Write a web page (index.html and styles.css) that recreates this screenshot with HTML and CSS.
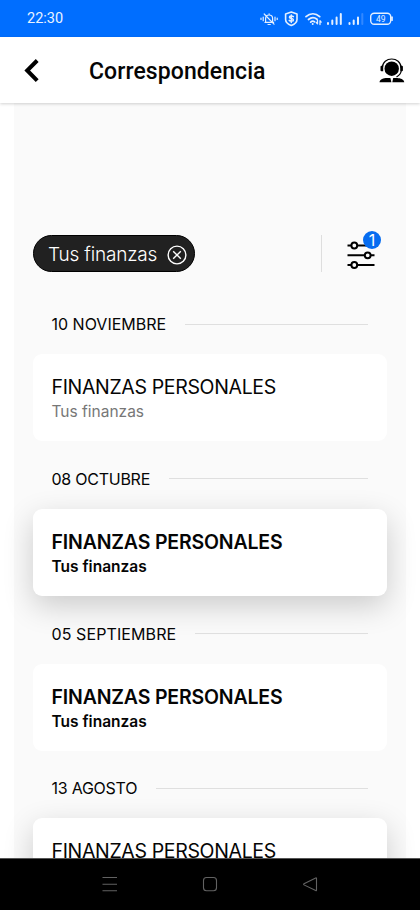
FILE: index.html
```html
<!DOCTYPE html>
<html lang="es">
<head>
<meta charset="utf-8">
<meta name="viewport" content="width=device-width, initial-scale=1">
<title>Correspondencia</title>
<link rel="stylesheet" href="styles.css">
</head>
<body>
<div class="phone">
  <div class="status">
    <span class="clock">22:30</span>
    <svg class="status-icons" width="136" height="20" viewBox="0 0 136 20" fill="none" stroke="#e3efff" stroke-width="1.2" stroke-linecap="round" stroke-linejoin="round">
      <path d="M6 13.400h8.600M6.600 13V9.500a3.500 3.500 0 0 1 7 0V13M9 15.500h2.300M10.100 4.800v1M5.200 5l9.800 10.200M4.200 8v3.700M2 9.200v1.300M16 8v3.700M18.200 9.200v1.300"/>
      <path stroke-width="1.6" d="M32.300 3.100l5.700 1.800v5.500c0 3-2.500 4.700-5.700 6-3.200-1.300-5.700-3-5.700-6V4.900z"/>
      <path stroke-width="1.5" d="M34.400 7.600c-1.100-1-4-.9-4 .6 0 1.700 4 .9 4 2.700 0 1.500-3 1.600-4.200.5M32.300 6v7.500"/>
      <path stroke-width="1.8" d="M47 7.600c4.200-3.700 9.600-3.700 13.700 0M49.500 10.500c2.700-2.300 6-2.300 8.500-.3M51.700 13.100c1.400-1.200 2.700-1.200 3.900-.2"/>
      <circle cx="53.700" cy="15" r="1" fill="#e3efff" stroke="none"/>
      <path stroke-width="1.3" d="M58.500 11v3.500M57.300 13.500l1.200 1.300M61 15.500V12M61 11.800l1.200 1.300"/>
      <g stroke-width="2" stroke-linecap="round"><path d="M69 15v-1M73.300 15v-3.500M77.600 15v-6.500M81.800 15v-10M90.500 15v-1M94.700 15v-3.500M99 15v-6.500"/><path stroke="#3288ff" d="M103.300 15v-10"/></g>
      <rect x="111.700" y="4.200" width="20" height="11" rx="3.500" stroke-width="1.400"/>
      <path stroke-width="1.700" d="M133 8.200v3"/>
      <text x="121.700" y="12.500" class="battery" text-anchor="middle">49</text>
    </svg>
  </div>
  <header class="header">
    <svg class="back" width="16" height="24" viewBox="0 0 16 24" fill="none" stroke="#000" stroke-width="4"><path d="M13.200 1.500L3.200 11.500l10 10.200"/></svg>
    <h1>Correspondencia</h1>
    <svg class="agent" width="26" height="26" viewBox="0 0 26 26">
      <circle cx="12.700" cy="10.700" r="7.200"/>
      <path d="M3.200 10C3.600-2 21.800-2 22.200 10" fill="none" stroke="#000" stroke-width="1.200"/>
      <path d="M1.500 8.800q0-1 1-1h1.700v5.500H2.500q-1 0-1-1zM21.200 7.800h1.700q1 0 1 1v3.500q0 1-1 1h-1.700z"/>
      <path d="M22.200 13q-.4 3.500-4.700 6" fill="none" stroke="#000" stroke-width="1.200"/>
      <path d="M.5 24.300c.5-3.200 4-4 7.400-4.200h3.500l1 4.200zM14.200 20.100h4c3.500.3 6.600 1.200 7.100 4.200h-12z"/>
    </svg>
  </header>
  <main class="panel">
    <div class="filters">
      <div class="chip"><span>Tus finanzas</span>
        <svg width="20" height="20" viewBox="0 0 20 20" fill="none" stroke="#fff" stroke-width="1.4"><circle cx="10" cy="10" r="8.900"/><path d="M6.200 6.200l7.600 7.600M13.800 6.200l-7.600 7.600"/></svg>
      </div>
      <div class="settings">
        <svg width="28" height="28" viewBox="0 0 28 28" fill="#fafafa" stroke="#000" stroke-width="2"><path d="M.5 4.500h27M.5 14.300h27M.5 24h27"/><circle cx="7.300" cy="4.500" r="2.900"/><circle cx="20.700" cy="14.300" r="2.900"/><circle cx="7.300" cy="24" r="2.900"/></svg>
        <span class="badge">1</span>
      </div>
    </div>
    <section class="group"><h2><span>10 NOVIEMBRE</span></h2><article class="card read"><h3>FINANZAS PERSONALES</h3><p>Tus finanzas</p></article></section>
    <section class="group"><h2><span class="tight">08 OCTUBRE</span></h2><article class="card unread raised"><h3>FINANZAS PERSONALES</h3><p>Tus finanzas</p></article></section>
    <section class="group"><h2><span class="loose">05 SEPTIEMBRE</span></h2><article class="card unread"><h3>FINANZAS PERSONALES</h3><p>Tus finanzas</p></article></section>
    <section class="group"><h2><span class="tight">13 AGOSTO</span></h2><article class="card read raised"><h3>FINANZAS PERSONALES</h3><p>Tus finanzas</p></article></section>
  </main>
  <nav class="nav">
    <svg width="16" height="16" viewBox="0 0 16 16"><path d="M.5 1.500h14.500M.5 8.200h14.500M.5 14.700h14.500"/></svg>
    <svg width="16" height="16" viewBox="0 0 16 16"><rect x="1.500" y="1.500" width="13" height="13.300" rx="3"/></svg>
    <svg width="16" height="16" viewBox="0 0 16 16"><path d="M14.500 2.400v11.800q0 .8-.8.400L2 8.900q-.8-.6 0-1.200L13.700 2q.8-.4.800.4z"/></svg>
  </nav>
</div>
</body>
</html>
```
FILE: styles.css
```css
* { box-sizing: border-box; }
body { margin: 0; background: #fff; color: #050505; font-family: Inter, "Liberation Sans", sans-serif; }
h1, h2, h3, p { margin: 0; }
svg { display: block; flex: none; }
.phone { display: flex; flex-direction: column; height: 910px; overflow: hidden; }
.status { flex: none; height: 37px; display: flex; align-items: center; justify-content: space-between; padding: 0 25px 0 27px; background: #006eff; color: #e9f3ff; }
.clock { padding-top: 1px; font: 14.5px/20px Roboto, sans-serif; }
.status-icons { margin-top: 1px; }
.battery { font: 8.5px Roboto, sans-serif; fill: #e3efff; stroke: none; }
.header { flex: none; height: 66px; display: flex; align-items: center; padding: 2px 15px 0 24px; background: #fff; box-shadow: 0 1px 3px rgba(0,0,0,.18); z-index: 1; }
.header h1 { margin: 2px 0 0 49px; font: 500 23px/30px Roboto, sans-serif; letter-spacing: .08px; color: #050505; }
.agent { margin-left: auto; }
.panel { flex: 1; min-height: 0; margin: 0 14px; padding: 132px 19px 0; background: #fafafa; }
.filters { display: flex; justify-content: space-between; }
.chip { display: flex; align-items: center; gap: 10px; width: 162px; height: 37px; padding: 2px 0 0 14px; border: 1px solid #000; border-radius: 19px; background: #212121; color: #fff; font-size: 19px; font-weight: 300; letter-spacing: -.18px; white-space: nowrap; }
.settings { position: relative; width: 66px; height: 37px; padding: 6px 0 0 25px; border-left: 1px solid #dedede; }
.badge { position: absolute; left: 41px; top: -4px; width: 18px; height: 18px; border-radius: 50%; background: #066cf0; color: #fff; font-size: 16px; line-height: 18px; text-align: center; }
.group { height: 154.8px; padding-top: 41px; }
.group h2 { display: flex; align-items: center; gap: 19px; height: 22px; padding: 0 19px 0 18.5px; font-size: 16px; line-height: 22px; font-weight: 400; }
.group h2::after { content: ""; flex: 1; height: 1px; background: #dfdfdf; }
.tight { letter-spacing: -.25px; }
.loose { letter-spacing: .1px; }
.card { height: 87px; margin-top: 19px; padding: 21px 19px 0 18.5px; border-radius: 9px; background: #fff; }
.raised { box-shadow: 0 10px 30px rgba(0,0,0,.19); }
.card h3 { font-size: 19.5px; line-height: 24px; font-weight: 400; letter-spacing: -.34px; white-space: nowrap; }
.card p { font-size: 15.5px; line-height: 20px; margin-top: 3px; color: #777; }
.unread h3 { font-weight: 600; letter-spacing: -.17px; }
.unread p { font-weight: 600; color: #050505; }
.nav { flex: none; height: 52px; display: flex; align-items: center; justify-content: center; gap: 84px; padding-bottom: 2px; background: #000; z-index: 1; border-top: 1px solid #555; }
.nav svg { fill: none; stroke: #626262; stroke-width: 1.1; }
```
